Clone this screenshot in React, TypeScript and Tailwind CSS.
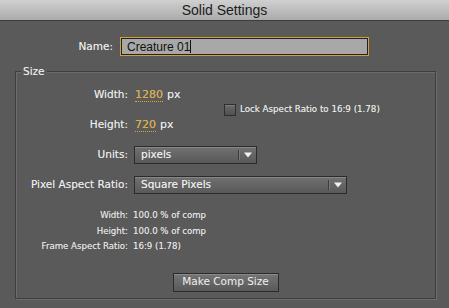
import React from "react";

const UI = { fontFamily: '"DejaVu Sans", "Liberation Sans", sans-serif' };
const ARIAL = { fontFamily: '"Liberation Sans", Arial, sans-serif' };

function Dropdown({ label, width, className = "" }: { label: string; width: string; className?: string }) {
  return (
    <div
      className={`flex h-[18px] items-stretch border border-[#2b2b2b] bg-gradient-to-b from-[#717171] to-[#595959] shadow-[inset_0_1px_0_#878787] ${width} ${className}`}
    >
      <span className="flex flex-1 items-center pl-[6px] text-[10.5px] text-[#f0f0f0]">{label}</span>
      <span className="my-[3px] w-px bg-[#3a3a3a] shadow-[1px_0_0_#7a7a7a]" />
      <span className="flex w-[17px] items-center justify-center">
        <svg width="8" height="6" viewBox="0 0 8 6">
          <path d="M0 0.5 H8 L4 5.5 Z" fill="#f2f2f2" />
        </svg>
      </span>
    </div>
  );
}

export default function App() {
  return (
    <div
      style={UI}
      className="flex h-[308px] w-[449px] flex-col bg-[#5a5a5a] text-[#ececec] [text-shadow:0_0_0.5px_rgba(255,255,255,0.5)]"
    >
      {/* title bar */}
      <div
        style={ARIAL}
        className="flex h-[21px] items-center justify-center border-b border-[#3c3c3c] bg-gradient-to-b from-[#d0d0d0] to-[#ababab] text-[14px] text-[#1c1c1c] [text-shadow:none]"
      >
        Solid Settings
      </div>

      {/* name */}
      <div className="mt-[16px] flex items-center">
        <span className="w-[113px] text-right text-[10.5px]">Name:</span>
        <div className="ml-[7px] flex h-[19px] w-[249px] items-center border border-[#d19f3c] bg-[#a8a8a8] shadow-[inset_0_0_0_1px_#222] [text-shadow:none]">
          <span style={ARIAL} className="pl-[6px] text-[12px] text-[#111]">Creature 01</span>
          <span className="h-[13px] w-px bg-[#111]" />
        </div>
      </div>

      {/* size group */}
      <div className="relative ml-[15px] mt-[15px] flex h-[228px] w-[421px] flex-col border border-[#3e3e3e] shadow-[inset_1px_1px_0_#6c6c6c,1px_1px_0_#6c6c6c]">
        <span className="absolute -top-[8px] left-[5px] bg-[#5a5a5a] px-[2px] text-[10.5px] leading-[14px]">Size</span>

        <div className="mt-[15px] flex items-center">
          <div className="flex w-[208px] flex-col gap-[14px]">
            <div className="flex h-[16px] items-center">
              <span className="w-[112px] text-right text-[10.5px]">Width:</span>
              <span className="ml-[7px] border-b border-dotted border-[#d7a83a] text-[11px] leading-[13px] text-[#dcac3e]">1280</span>
              <span className="ml-[4px] text-[11px]">px</span>
            </div>
            <div className="flex h-[16px] items-center">
              <span className="w-[112px] text-right text-[10.5px]">Height:</span>
              <span className="ml-[7px] border-b border-dotted border-[#d7a83a] text-[11px] leading-[13px] text-[#dcac3e]">720</span>
              <span className="ml-[4px] text-[11px]">px</span>
            </div>
          </div>
          <div className="flex items-center">
            <span className="h-[12px] w-[12px] border border-[#2e2e2e] bg-gradient-to-b from-[#6a6a6a] to-[#505050] shadow-[inset_0_1px_0_#7c7c7c]" />
            <span className="ml-[4px] text-[8.7px]">Lock Aspect Ratio to 16:9 (1.78)</span>
          </div>
        </div>

        <div className="mt-[13px] flex items-center">
          <span className="w-[112px] text-right text-[10.5px]">Units:</span>
          <Dropdown label="pixels" width="w-[123px]" className="ml-[6px]" />
        </div>

        <div className="mt-[12px] flex items-center">
          <span className="w-[112px] text-right text-[10.5px]">Pixel Aspect Ratio:</span>
          <Dropdown label="Square Pixels" width="w-[213px]" className="ml-[6px]" />
        </div>

        <div className="mt-[14px] flex flex-col text-[8.6px] leading-[15.5px] text-[#e6e6e6]">
          <div className="flex">
            <span className="w-[112px] text-right">Width:</span>
            <span className="ml-[5px]">100.0 % of comp</span>
          </div>
          <div className="flex">
            <span className="w-[112px] text-right">Height:</span>
            <span className="ml-[5px]">100.0 % of comp</span>
          </div>
          <div className="flex">
            <span className="w-[112px] text-right">Frame Aspect Ratio:</span>
            <span className="ml-[5px]">16:9 (1.78)</span>
          </div>
        </div>

        <div className="mt-[18px] flex justify-center">
          <button className="flex h-[19px] w-[106px] items-center justify-center border border-[#2b2b2b] bg-gradient-to-b from-[#747474] to-[#595959] text-[10.5px] text-[#f0f0f0] shadow-[inset_0_1px_0_#8a8a8a]">
            Make Comp Size
          </button>
        </div>
      </div>
    </div>
  );
}
